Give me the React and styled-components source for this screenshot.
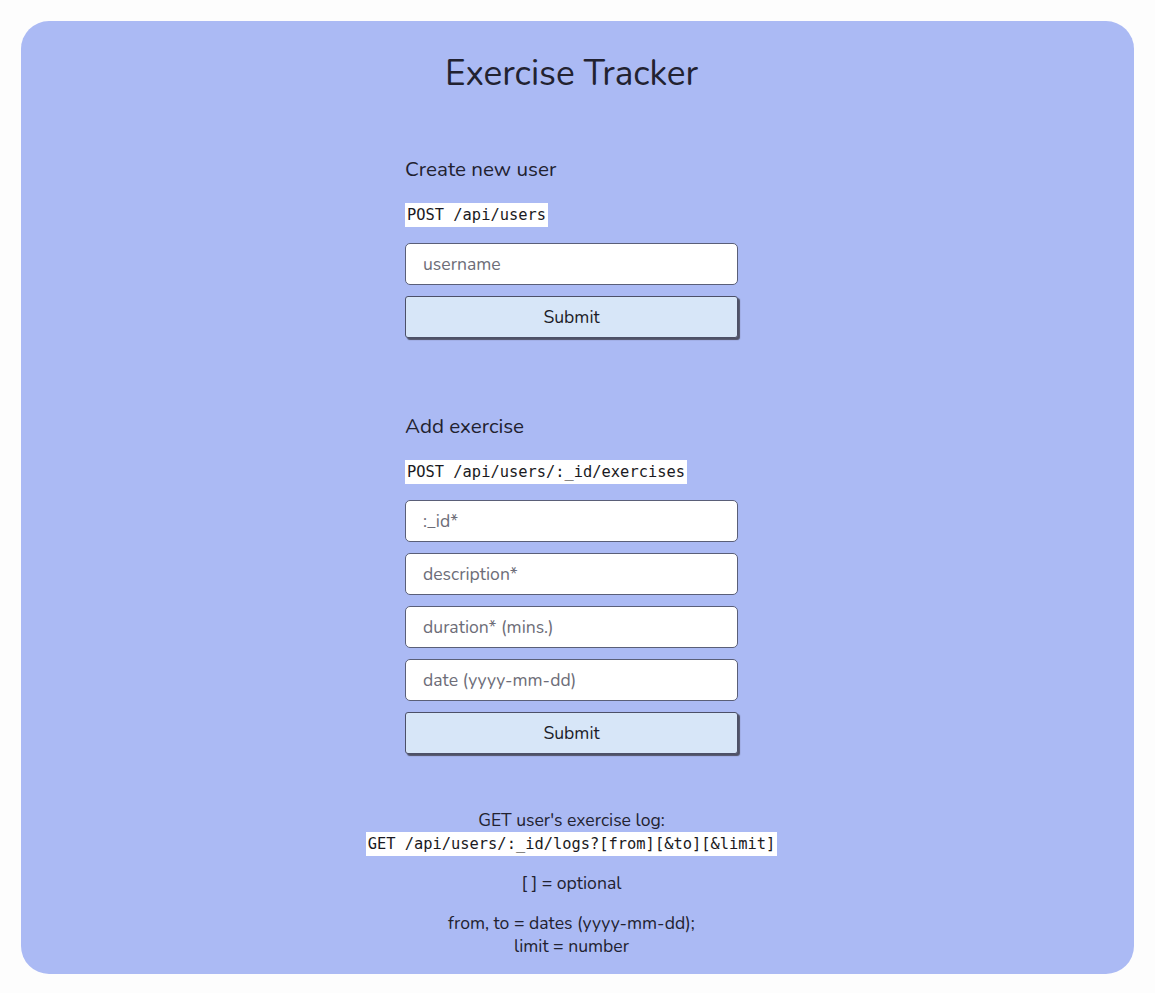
import styled, { createGlobalStyle } from "styled-components";

const GlobalStyle = createGlobalStyle`
  body {
    margin: 0;
    background: #fdfdfd;
    font-family: Nunito, Lato, "Noto Sans", sans-serif;
    color: #222230;
  }
`;

const Page = styled.div`
  padding: 21px 21px 19px;
`;

const Card = styled.main`
  background: #abbaf4;
  border-radius: 28px;
  min-height: 953px;
  box-sizing: border-box;
  padding: 30px 12px 0 0;
  display: flex;
  flex-direction: column;
  align-items: center;
`;

const Title = styled.h1`
  margin: 0;
  font-size: 35.2px;
  font-weight: 400;
  line-height: 44px;
`;

const Section = styled.section`
  width: 333px;
  margin-top: ${(p) => p.top}px;
  display: flex;
  flex-direction: column;
`;

const Heading = styled.h3`
  margin: 0;
  font-size: 20.6px;
  font-weight: 400;
  line-height: 26px;
`;

const Code = styled.code`
  align-self: ${(p) => (p.center ? "center" : "flex-start")};
  margin-top: ${(p) => p.top || 0}px;
  background: #ffffff;
  font-family: "DejaVu Sans Mono", "Liberation Mono", monospace;
  font-size: 15.4px;
  line-height: 24px;
  padding: 0 2px;
  color: #1a1a22;
`;

const Form = styled.form`
  display: flex;
  flex-direction: column;
  gap: 11px;
  margin-top: 16px;
`;

const Input = styled.input`
  height: 42px;
  box-sizing: border-box;
  border: 1px solid #5a5f78;
  border-radius: 5px;
  background: #ffffff;
  padding: 0 17px;
  font-family: inherit;
  font-size: 17.6px;
  color: #222;
  &::placeholder {
    color: #6d6d78;
  }
`;

const Button = styled.button`
  height: 42px;
  border: 1px solid #4c5068;
  border-radius: 3px;
  background: #d7e6f8;
  box-shadow: 2px 2px 1px #4f5266;
  font-family: inherit;
  font-size: 17.6px;
  color: #1d1d28;
`;

const Info = styled.div`
  margin-top: 55px;
  display: flex;
  flex-direction: column;
  align-items: center;
  font-size: 17.6px;
  line-height: 23px;
  text-align: center;
`;

const Note = styled.p`
  margin: ${(p) => p.top}px 0 0;
`;

export default function App() {
  return (
    <Page>
      <GlobalStyle />
      <Card>
        <Title>Exercise Tracker</Title>
        <Section top={61}>
          <Heading>Create new user</Heading>
          <Code top={21}>POST /api/users</Code>
          <Form>
            <Input placeholder="username" />
            <Button type="button">Submit</Button>
          </Form>
        </Section>
        <Section top={75}>
          <Heading>Add exercise</Heading>
          <Code top={21}>POST /api/users/:_id/exercises</Code>
          <Form>
            <Input placeholder=":_id*" />
            <Input placeholder="description*" />
            <Input placeholder="duration* (mins.)" />
            <Input placeholder="date (yyyy-mm-dd)" />
            <Button type="button">Submit</Button>
          </Form>
        </Section>
        <Info>
          <span>GET user's exercise log:</span>
          <Code center>GET /api/users/:_id/logs?[from][&amp;to][&amp;limit]</Code>
          <Note top={16}>[ ] = optional</Note>
          <Note top={17}>
            from, to = dates (yyyy-mm-dd);
            <br />
            limit = number
          </Note>
        </Info>
      </Card>
    </Page>
  );
}
